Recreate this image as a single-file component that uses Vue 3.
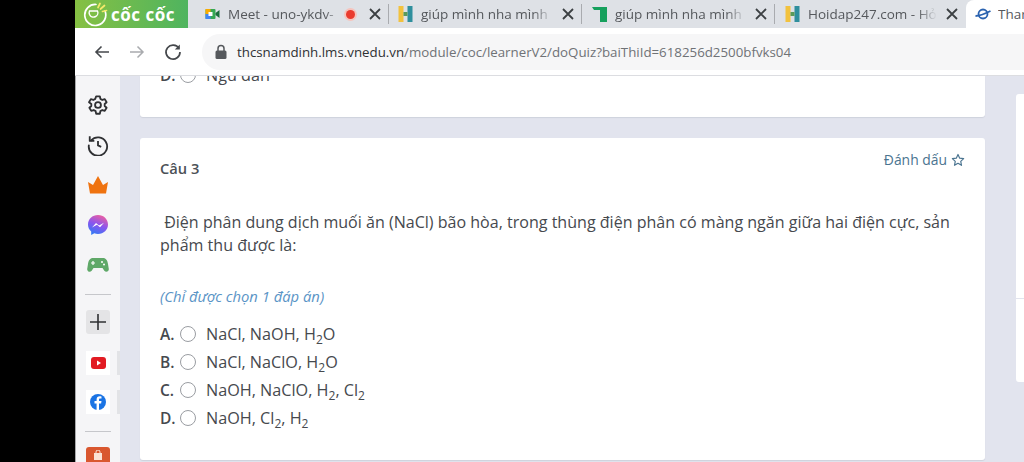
<script setup>
const tabs = [
  { id: 'meet', title: 'Meet - uno-ykdv-', width: 201, pad: 16, rec: true },
  { id: 'h', title: 'giúp mình nha mình', width: 193, pad: 8 },
  { id: 'green', title: 'giúp mình nha mình', width: 193, pad: 9 },
  { id: 'h', title: 'Hoidap247.com - Hỏi', width: 191, pad: 9 },
]
</script>

<template>
  <div class="screen">
    <div class="black"></div>
    <div class="browser">
      <div class="tabbar">
        <div class="brand">
          <svg width="28" height="26" viewBox="0 0 28 26" fill="none" stroke="#fff" stroke-width="1.700">
            <path d="M15 3.500a10.500 10.500 0 1 0 9 6.500" stroke-linecap="round" />
            <path d="M8.500 10h8a4.200 4.200 0 0 1-8 3.500A4.500 4.500 0 0 1 8.500 10z" stroke-width="1.400" />
            <path d="M17 6.500l2-4M19.500 8l4-3.500M21.500 10.500l4-1" stroke="#f5e96a" stroke-linecap="round" />
          </svg>
          <span>cốc cốc</span>
        </div>
        <div
          v-for="(tab, i) in tabs"
          :key="i"
          class="tab"
          :style="{ width: tab.width + 'px', paddingLeft: tab.pad + 'px' }"
        >
          <svg v-if="tab.id === 'meet'" class="fav" width="17" height="14" viewBox="0 0 16 14">
            <rect x="1" y="2" width="10" height="10" rx="1" fill="#34a853" />
            <rect x="1" y="2" width="5" height="5" fill="#f9ab00" />
            <rect x="1" y="7" width="5" height="5" fill="#4285f4" />
            <rect x="4" y="5" width="4" height="4" fill="#fff" />
            <path d="M11 6l4-3v8l-4-3z" fill="#1a6e3c" />
          </svg>
          <svg v-else-if="tab.id === 'h'" class="fav" width="17" height="16" viewBox="0 0 16 16">
            <rect x="1" y="0" width="5" height="16" fill="#f2c23e" />
            <rect x="10" y="0" width="5" height="16" fill="#2f8f9d" />
            <rect x="6" y="6" width="4" height="4" fill="#5a9a5a" />
          </svg>
          <svg v-else class="fav" width="17" height="16" viewBox="0 0 17 16">
            <path d="M1 1h15v15H9V4H3z" fill="#16a05d" />
          </svg>
          <span class="tab-title">{{ tab.title }}</span>
          <span v-if="tab.rec" class="rec"></span>
          <svg class="close" width="12" height="12" viewBox="0 0 12 12" stroke="#3c4043" stroke-width="1.800">
            <path d="M1 1l10 10M11 1L1 11" />
          </svg>
        </div>
        <div class="tab active">
          <svg width="16" height="14" viewBox="0 0 15 14" fill="none" stroke="#2b63b0" stroke-width="1.800">
            <ellipse cx="7.500" cy="7" rx="4.500" ry="4.500" />
            <path d="M0 9c5 0 9-2 15-5" />
          </svg>
          <span class="tab-title">Thar</span>
        </div>
      </div>

      <div class="toolbar">
        <svg width="16" height="14" viewBox="0 0 16 14" fill="none" stroke="#45484c" stroke-width="1.600">
          <path d="M15 7H2M7.500 1.500L2 7l5.500 5.500" />
        </svg>
        <svg width="16" height="14" viewBox="0 0 16 14" fill="none" stroke="#a9abae" stroke-width="1.500">
          <path d="M1 7h13M8.500 1.500L14 7l-5.500 5.500" />
        </svg>
        <svg width="18" height="18" viewBox="0 0 18 18" fill="none" stroke="#45484c" stroke-width="1.700">
          <path d="M15 5.500A7 7 0 1 0 16 9" />
          <path d="M15.800 1.500v5h-5" fill="#45484c" stroke="none" />
        </svg>
        <div class="urlbar">
          <svg width="14" height="16" viewBox="0 0 14 16">
            <path d="M4 7V4.500a3 3 0 0 1 6 0V7" fill="none" stroke="#55585c" stroke-width="1.500" />
            <rect x="1.500" y="6.500" width="11" height="8.500" rx="1.500" fill="#55585c" />
          </svg>
          <span class="url"><b>thcsnamdinh.lms.vnedu.vn</b>/module/coc/learnerV2/doQuiz?baiThiId=618256d2500bfvks04</span>
        </div>
      </div>

      <div class="page">
        <aside class="side">
          <svg width="22" height="22" viewBox="0 0 24 24" fill="none" stroke="#2f3033" stroke-width="2">
            <circle cx="12" cy="12" r="3.200" />
            <path d="M10 2.500h4l.6 2.800 2.100 1.200 2.700-.9 2 3.400-2.100 1.900v2.200l2.100 1.900-2 3.400-2.700-.9-2.100 1.200-.6 2.800h-4l-.6-2.800-2.100-1.200-2.700.9-2-3.400 2.100-1.900V10.900L2.200 9 4.200 5.600l2.700.9L9 5.300z" stroke-linejoin="round" />
          </svg>
          <svg width="22" height="22" viewBox="0 0 24 24" fill="none" stroke="#2f3033" stroke-width="2">
            <path d="M4.500 7A10 10 0 1 1 2 12.500" stroke-linecap="round" />
            <path d="M3 2.500V7.500h5" stroke-linejoin="round" />
            <path d="M12 7.500V12.500l3.500 1.500" />
          </svg>
          <svg width="22" height="22" viewBox="0 0 22 20">
            <path d="M1 7l5 3L11 1l5 9 5-3-2 11.500H3z" fill="#ef7310" />
          </svg>
          <svg width="22" height="22" viewBox="0 0 22 22">
            <defs>
              <linearGradient id="msg" x1="0.300" y1="1" x2="0.700" y2="0">
                <stop offset="0" stop-color="#2f7bf5" />
                <stop offset="0.500" stop-color="#8a55ee" />
                <stop offset="1" stop-color="#ee5fa0" />
              </linearGradient>
            </defs>
            <path d="M11 1C5.300 1 1 5.100 1 10.500c0 2.900 1.200 5.300 3.200 7V21l3.100-1.700c1.200.4 2.400.6 3.700.6 5.700 0 10-4.100 10-9.400S16.700 1 11 1z" fill="url(#msg)" />
            <path d="M5 13.500l4-4.500 3 2.500 5-2.800-4 4.500-3-2.500z" fill="#fff" />
          </svg>
          <svg width="22" height="22" viewBox="0 -3 22 22">
            <path d="M6 1h10c3 0 4.500 2.500 5 6l.8 5c.3 2.500-2.800 4-4.500 1.700L15.500 11h-9l-1.800 2.700C3 16 0 14.500.2 12L1 7c.5-3.500 2-6 5-6z" fill="#5fa868" />
            <path d="M4 6h4M6 4v4" stroke="#fff" stroke-width="1.200" />
            <circle cx="15" cy="5" r="1" fill="#fff" />
            <circle cx="17" cy="7.500" r="1" fill="#fff" />
          </svg>
          <div class="rule"></div>
          <div class="plus">
            <svg width="16" height="16" viewBox="0 0 16 16" stroke="#2f3033" stroke-width="1.600">
              <path d="M8 0v16M0 8h16" />
            </svg>
          </div>
          <div class="app yt">
            <svg width="15" height="12" viewBox="0 0 15 12">
              <rect width="15" height="12" rx="3" fill="#e21b23" />
              <path d="M6 3.500l4 2.500-4 2.500z" fill="#fff" />
            </svg>
            <span class="app-edge"></span>
          </div>
          <div class="app fb">
            <svg width="16" height="16" viewBox="0 0 16 16">
              <circle cx="8" cy="8" r="8" fill="#1b74e4" />
              <path d="M9 16V9.500h2.100l.4-2.400H9V5.700c0-.8.300-1.200 1.200-1.200h1.300V2.400C11 2.300 10.400 2.200 9.800 2.200 7.800 2.200 6.600 3.400 6.600 5.400v1.700H4.500v2.400h2.100V16z" fill="#fff" />
            </svg>
            <span class="app-edge"></span>
          </div>
          <div class="rule last"></div>
          <div class="shop">
            <svg width="10" height="10" viewBox="0 0 10 10">
              <rect x="1" y="3" width="8" height="7" fill="#fbe3d6" />
              <path d="M3 4V2a2 2 0 0 1 4 0v2" fill="none" stroke="#fbe3d6" />
            </svg>
          </div>
        </aside>

        <main class="content">
          <div class="column">
            <section class="card prev">
              <div class="answer prev-row">
                <span class="letter">D.</span>
                <i class="radio"></i>
                <span>Ngu dan</span>
              </div>
            </section>
            <section class="card question">
              <div class="head">
                <span class="num">Câu 3</span>
                <span class="mark">
                  Đánh dấu
                  <svg width="14" height="14" viewBox="0 0 24 24" fill="none" stroke="#4a7490" stroke-width="2">
                    <path d="M12 2.500l2.900 6.300 6.800.8-5 4.700 1.300 6.800-6-3.400-6 3.400 1.300-6.800-5-4.700 6.800-.8z" stroke-linejoin="round" />
                  </svg>
                </span>
              </div>
              <p class="text">&nbsp;Điện phân dung dịch muối ăn (NaCl) bão hòa, trong thùng điện phân có màng ngăn giữa hai điện cực, sản phẩm thu được là:</p>
              <p class="hint">(Chỉ được chọn 1 đáp án)</p>
              <div class="answers">
                <div class="answer"><span class="letter">A.</span><i class="radio"></i><span>NaCl, NaOH, H<sub>2</sub>O</span></div>
                <div class="answer"><span class="letter">B.</span><i class="radio"></i><span>NaCl, NaClO, H<sub>2</sub>O</span></div>
                <div class="answer"><span class="letter">C.</span><i class="radio"></i><span>NaOH, NaClO, H<sub>2</sub>, Cl<sub>2</sub></span></div>
                <div class="answer"><span class="letter">D.</span><i class="radio"></i><span>NaOH, Cl<sub>2</sub>, H<sub>2</sub></span></div>
              </div>
            </section>
          </div>
          <div class="right-panel">
            <div class="right-line"></div>
          </div>
        </main>
      </div>
    </div>
  </div>
</template>

<style scoped>
.screen {
  display: flex;
  width: 1024px;
  height: 462px;
  overflow: hidden;
  background: #000;
  font-family: "Open Sans", "Noto Sans", sans-serif;
  color: #4a4d52;
}

.black {
  flex: 0 0 75px;
  background: #000;
}

.browser {
  flex: 1;
  min-width: 0;
  display: flex;
  flex-direction: column;
}

.tabbar {
  flex: 0 0 28px;
  display: flex;
  align-items: center;
  background: #dee1e6;
  overflow: hidden;
}

.brand {
  flex: 0 0 113px;
  height: 28px;
  display: flex;
  align-items: center;
  gap: 2px;
  padding-left: 6px;
  box-sizing: border-box;
  background: linear-gradient(90deg, #86c043, #4fb45f);
  color: #fff;
  font-size: 17px;
  font-weight: 700;
  letter-spacing: 0.5px;
  white-space: nowrap;
}

.tab {
  flex: none;
  height: 28px;
  display: flex;
  align-items: center;
  box-sizing: border-box;
  font-size: 13.500px;
  color: #55585c;
  position: relative;
  white-space: nowrap;
}

.tab::after {
  content: "";
  position: absolute;
  right: 0;
  top: 4px;
  height: 20px;
  width: 1px;
  background: #a9abaf;
}

.tab:nth-last-child(2)::after {
  display: none;
}

.tab.active {
  flex: 1;
  background: #fff;
  border-radius: 8px 0 0 0;
  padding-left: 9px;
}

.tab.active::after {
  display: none;
}

.fav {
  flex: none;
}

.tab-title {
  margin-left: 7px;
  flex: 1;
  min-width: 0;
  overflow: hidden;
  -webkit-mask-image: linear-gradient(90deg, #000 85%, transparent);
  mask-image: linear-gradient(90deg, #000 85%, transparent);
}

.tab.active .tab-title {
  -webkit-mask-image: none;
  mask-image: none;
}

.rec {
  flex: none;
  width: 9px;
  height: 9px;
  border-radius: 50%;
  background: #ea3b2e;
  box-shadow: 0 0 0 2px #f6c4bd;
  margin-left: 4px;
  margin-right: 5px;
}

.close {
  flex: none;
  margin: 0 8px 0 9px;
}

.tab:first-of-type .close {
  margin-right: 7px;
}

.toolbar {
  flex: 0 0 48px;
  box-sizing: border-box;
  display: flex;
  align-items: center;
  gap: 19px;
  padding: 0 0 0 19px;
  background: #fff;
  border-bottom: 1px solid #dcdde1;
}

.urlbar {
  flex: 1;
  height: 36px;
  margin-left: 1px;
  padding-left: 12px;
  display: flex;
  align-items: center;
  gap: 9px;
  background: #f6f6f7;
  border-radius: 18px 0 0 18px;
}

.url {
  font-size: 13.300px;
  color: #6f7276;
  white-space: nowrap;
}

.url b {
  font-weight: 400;
  color: #2f3134;
}

.page {
  flex: 1;
  min-height: 0;
  display: flex;
}

.side {
  flex: 0 0 45px;
  box-sizing: border-box;
  display: flex;
  flex-direction: column;
  align-items: center;
  padding-top: 18px;
  gap: 18px;
  background: #f5f5f7;
  border-left: 1px solid #a8a8aa;
  overflow: hidden;
}

.side > svg {
  flex: none;
}

.rule {
  width: 26px;
  height: 1px;
  flex: none;
  background: #c6c7cb;
}

.rule.last {
  margin-top: -1px;
}

.plus {
  flex: none;
  width: 24px;
  height: 24px;
  margin-top: -3px;
  border-radius: 3px;
  background: #e4e4e6;
  display: flex;
  align-items: center;
  justify-content: center;
}

.app {
  flex: none;
  width: 24px;
  height: 24px;
  display: flex;
  align-items: center;
  justify-content: center;
  background: #fff;
  position: relative;
}

.app.yt {
  margin-top: -1px;
}

.app.fb {
  margin-top: -3px;
}

.app-edge {
  position: absolute;
  right: -10px;
  top: 0;
  width: 3px;
  height: 24px;
  background: #e2e3e6;
}

.shop {
  flex: none;
  width: 24px;
  height: 24px;
  margin-top: -3px;
  padding-top: 3px;
  box-sizing: border-box;
  display: flex;
  justify-content: center;
  border-radius: 3px;
  background: #d9572f;
}

.content {
  flex: 1;
  min-width: 0;
  display: flex;
  gap: 31px;
  padding-left: 20px;
  background: #e2e4ee;
  overflow: hidden;
}

.column {
  flex: 0 0 845px;
}

.card {
  background: #fff;
  border-radius: 3px;
  box-shadow: 0 1px 1px #cfd2dc;
  box-sizing: border-box;
}

.prev {
  height: 41px;
  border-radius: 0 0 3px 3px;
  overflow: hidden;
  padding-left: 20px;
}

.prev-row {
  height: 20px;
  margin-top: -15px;
}

.question {
  height: 322px;
  margin-top: 21px;
  padding: 20px 20px 0;
}

.head {
  display: flex;
  justify-content: space-between;
  align-items: flex-start;
}

.num {
  font-size: 14.700px;
  font-weight: 600;
  line-height: 20px;
  color: #4c5157;
}

.mark {
  display: flex;
  align-items: center;
  gap: 4px;
  margin-top: -8px;
  font-size: 13.900px;
  line-height: 20px;
  color: #4a7490;
}

.text {
  margin: 33px 0 0;
  width: 805px;
  font-size: 16.060px;
  line-height: 23px;
  color: #46494e;
}

.hint {
  margin: 30px 0 0;
  font-size: 14.800px;
  font-style: italic;
  line-height: 18px;
  color: #5a94c6;
}

.answers {
  margin-top: 15px;
  display: flex;
  flex-direction: column;
}

.answer {
  height: 28px;
  display: flex;
  align-items: center;
  font-size: 16.200px;
  color: #46494e;
}

.answer sub {
  font-size: 12px;
  line-height: 0;
}

.letter {
  width: 20px;
  font-size: 15.500px;
  font-weight: 600;
}

.radio {
  flex: none;
  width: 14px;
  height: 14px;
  border: 1px solid #9a9da2;
  border-radius: 50%;
  margin-right: 10px;
  background: #fff;
}

.right-panel {
  flex: 0 0 20px;
  align-self: flex-start;
  height: 288px;
  margin-top: 18px;
  background: #fff;
  border-radius: 3px 0 0 3px;
  position: relative;
}

.right-line {
  position: absolute;
  left: 0;
  right: 0;
  top: 204px;
  height: 1px;
  background: #e2e4ee;
}
</style>
